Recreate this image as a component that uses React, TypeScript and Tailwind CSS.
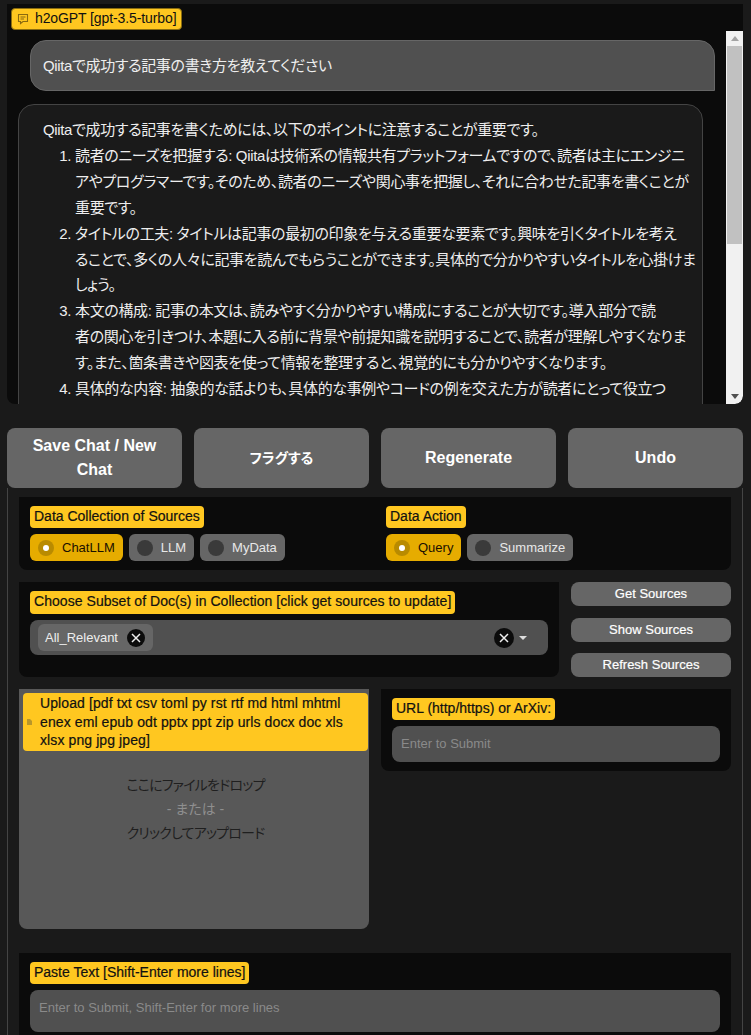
const sans = "font-['Liberation_Sans','Noto_Sans_CJK_JP',sans-serif] [font-feature-settings:'palt']";

function Label({ children, className = "" }: { children: React.ReactNode; className?: string }) {
  return (
    <span className={`block h-[22px] w-fit rounded-[4px] bg-[#ffc720] px-1 text-[14px] leading-[21px] text-[#111] [-webkit-text-stroke:0.2px_#111] ${className}`}>
      {children}
    </span>
  );
}

function Radio({ label, checked = false }: { label: string; checked?: boolean }) {
  return (
    <div className={`flex h-[27px] items-center rounded-[6px] pr-2 pl-2 text-[13px] ${checked ? "bg-[#e6ac00] text-[#1a1000]" : "bg-[#666] text-[#e8e8e8]"}`}>
      {checked ? (
        <span className="mr-2 flex size-4 items-center justify-center rounded-full bg-[#b98b00]">
          <span className="size-[6px] rounded-full bg-white" />
        </span>
      ) : (
        <span className="mr-2 size-4 rounded-full bg-[#3a3a3a]" />
      )}
      {label}
    </div>
  );
}

function ClearIcon({ large = false }: { large?: boolean }) {
  return (
    <span className={`flex items-center justify-center rounded-full bg-[#0b0b0b] ${large ? "size-5" : "size-[18px]"}`}>
      <svg width="10" height="10" viewBox="0 0 10 10" stroke="#eee" strokeWidth="1.5">
        <path d="M1 1l8 8M9 1l-8 8" />
      </svg>
    </span>
  );
}

function ActionButton({ children }: { children: React.ReactNode }) {
  return (
    <button className="flex h-[60px] items-center justify-center rounded-[8px] bg-[#666] px-4 text-center text-[16px] leading-[24px] font-bold text-white">
      {children}
    </button>
  );
}

function SourceButton({ label }: { label: string }) {
  return (
    <button className="flex h-[24px] items-center justify-center rounded-[8px] bg-[#666] text-[13px] text-white [-webkit-text-stroke:0.2px_#fff]">
      {label}
    </button>
  );
}

const answer = [
  [
    "読者のニーズを把握する: Qiitaは技術系の情報共有プラットフォームですので、読者は主にエンジニ",
    "アやプログラマーです。そのため、読者のニーズや関心事を把握し、それに合わせた記事を書くことが",
    "重要です。",
  ],
  [
    "タイトルの工夫: タイトルは記事の最初の印象を与える重要な要素です。興味を引くタイトルを考え",
    "ることで、多くの人々に記事を読んでもらうことができます。具体的で分かりやすいタイトルを心掛けま",
    "しょう。",
  ],
  [
    "本文の構成: 記事の本文は、読みやすく分かりやすい構成にすることが大切です。導入部分で読",
    "者の関心を引きつけ、本題に入る前に背景や前提知識を説明することで、読者が理解しやすくなりま",
    "す。また、箇条書きや図表を使って情報を整理すると、視覚的にも分かりやすくなります。",
  ],
  ["具体的な内容: 抽象的な話よりも、具体的な事例やコードの例を交えた方が読者にとって役立つ", "内容になります。"],
];

export default function App() {
  return (
    <div className={`h-[1035px] overflow-hidden bg-[#1a1a1a] pt-1 ${sans}`}>
      {/* chat */}
      <div className="relative mr-2 ml-[7px] h-[400px] overflow-hidden rounded-b-[8px] bg-[#0b0b0b] text-[15px] leading-[25.9px] tracking-[-0.35px] text-[#eee]">
        <div className="absolute top-1 left-1 z-10 flex h-[22px] items-center rounded-[4px] border border-[#8a6d10] bg-[#ffc720] px-1 text-[14px] tracking-[-0.1px] text-[#111]">
          <svg className="mr-[6px] ml-[1px]" width="12" height="12" viewBox="0 0 24 24" fill="none" stroke="#8a6a10" strokeWidth="2.2">
            <path d="M3 3h18v14H12l-5 4v-4H3zM7 8h10M7 12h7" />
          </svg>
          h2oGPT [gpt-3.5-turbo]
        </div>
        <div className="absolute top-[27px] right-0 bottom-0 z-10 flex w-[17px] flex-col items-center rounded-br-[8px] bg-[#f1f1f1]">
          <svg className="mt-[5px]" width="8" height="5" viewBox="0 0 8 5"><path d="M4 0l4 5H0z" fill="#a3a3a3" /></svg>
          <div className="mt-[5px] h-[198px] w-[15px] bg-[#c1c1c1]" />
          <svg className="mt-auto mb-[5px]" width="8" height="5" viewBox="0 0 8 5"><path d="M4 5l4-5H0z" fill="#505050" /></svg>
        </div>
        <div className="pt-9 pl-[11px]">
          <div className="ml-3 flex h-[51px] w-[685px] items-center rounded-t-[16px] rounded-bl-[16px] border border-[#666] bg-[#505050] pl-3">
            Qiitaで成功する記事の書き方を教えてください
          </div>
          <div className="mt-[13px] w-[685px] rounded-t-[16px] border border-[#444] bg-[#1a1a1a] pt-3 pr-3 pl-6 whitespace-nowrap">
            <p>Qiitaで成功する記事を書くためには、以下のポイントに注意することが重要です。</p>
            <ol className="list-decimal pl-8">
              {answer.map((lines) => (
                <li key={lines[0]}>
                  {lines.map((line) => (
                    <span key={line} className="block">{line}</span>
                  ))}
                </li>
              ))}
            </ol>
          </div>
        </div>
      </div>

      {/* actions */}
      <div className="mt-6 mr-2 ml-[7px] grid grid-cols-4 gap-3">
        <ActionButton>Save Chat / New Chat</ActionButton>
        <ActionButton><span className="text-[14px]">フラグする</span></ActionButton>
        <ActionButton>Regenerate</ActionButton>
        <ActionButton>Undo</ActionButton>
      </div>

      <div className="mr-2 ml-[7px] flex flex-col gap-3 border-x border-[#444] px-[11px] pt-[9px]">
        {/* sources mode */}
        <div className="grid h-[73px] grid-cols-[356px_1fr] rounded-b-[8px] bg-[#0b0b0b] pt-[9px] pl-[11px]">
          <div>
            <Label>Data Collection of Sources</Label>
            <div className="mt-[6px] flex gap-[6px]">
              <Radio label="ChatLLM" checked />
              <Radio label="LLM" />
              <Radio label="MyData" />
            </div>
          </div>
          <div>
            <Label>Data Action</Label>
            <div className="mt-[6px] flex gap-[6px]">
              <Radio label="Query" checked />
              <Radio label="Summarize" />
            </div>
          </div>
        </div>

        {/* doc subset */}
        <div className="flex h-[95px] gap-3">
          <div className="w-[540px] rounded-b-[8px] bg-[#0b0b0b] px-[11px] pt-[9px]">
            <Label className="h-[23px] tracking-[0.05px]">Choose Subset of Doc(s) in Collection [click get sources to update]</Label>
            <div className="mt-[6px] flex h-[35px] items-center rounded-[8px] bg-[#505050] pr-[21px] pl-2 text-[13px] text-[#eee]">
              <div className="flex h-[27px] items-center gap-[9px] rounded-[6px] bg-[#666] pr-2 pl-[7px]">
                All_Relevant
                <ClearIcon />
              </div>
              <div className="ml-auto flex items-center gap-[5px]">
                <ClearIcon large />
                <svg width="8" height="4" viewBox="0 0 8 4"><path d="M0 0h8L4 4z" fill="#ddd" /></svg>
              </div>
            </div>
          </div>
          <div className="flex flex-1 flex-col justify-between">
            <SourceButton label="Get Sources" />
            <SourceButton label="Show Sources" />
            <SourceButton label="Refresh Sources" />
          </div>
        </div>

        {/* upload and url */}
        <div className="flex h-[240px] items-start gap-3">
          <div className="h-[240px] w-[350px] rounded-b-[8px] bg-[#585858] p-1 pr-[1px]">
            <div className="flex h-[58px] items-center rounded-[4px] bg-[#ffc720] pl-1 text-[14px] leading-[18.5px] tracking-[0.1px] text-[#111] [-webkit-text-stroke:0.2px_#111]">
              <svg className="mr-2 shrink-0" width="5" height="6" viewBox="0 0 5 6" fill="#b8962a"><path d="M0 0h3l2 2v4H0z" /></svg>
              <span>Upload [pdf txt csv toml py rst rtf md html mhtml enex eml epub odt pptx ppt zip urls docx doc xls xlsx png jpg jpeg]</span>
            </div>
            <div className="mt-[22px] flex flex-col items-center text-[14px] leading-[24px] tracking-[-0.8px] text-[#1f1f1f]">
              <span>ここにファイルをドロップ</span>
              <span className="tracking-normal text-[#8f8f8f]">- または -</span>
              <span>クリックしてアップロード</span>
            </div>
          </div>
          <div className="h-[82px] flex-1 rounded-b-[8px] bg-[#0b0b0b] px-[11px] pt-[9px]">
            <Label>URL (http/https) or ArXiv:</Label>
            <div className="mt-[6px] flex h-[36px] items-center rounded-[8px] bg-[#505050] pl-[9px] text-[13px] text-[#8a8a8a]">
              Enter to Submit
            </div>
          </div>
        </div>

        {/* paste */}
        <div className="mt-3 h-[90px] bg-[#0b0b0b] px-[11px] pt-[9px]">
          <Label>Paste Text [Shift-Enter more lines]</Label>
          <div className="mt-[6px] h-[42px] rounded-[8px] bg-[#505050] pt-[9px] pl-[9px] text-[13px] leading-[18px] text-[#8a8a8a]">
            Enter to Submit, Shift-Enter for more lines
          </div>
        </div>
      </div>
    </div>
  );
}
